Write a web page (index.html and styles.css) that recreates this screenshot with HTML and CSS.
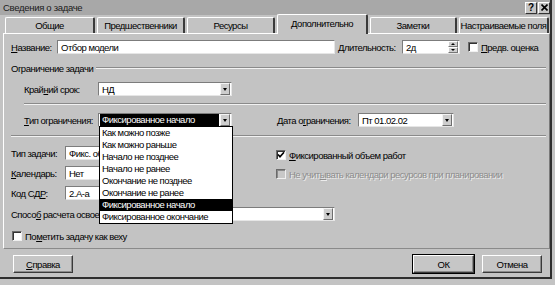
FILE: index.html
```html
<!DOCTYPE html>
<html lang="ru">
<head>
    <meta charset="UTF-8">
    <title>Сведения о задаче</title>
    <link rel="stylesheet" href="styles.css">
</head>
<body>
    <div class="window">
        <div class="titlebar">
            <span class="title">Сведения о задаче</span>
            <div class="caption-btns">
                <span class="cbtn">?</span>
                <span class="cbtn">
                    <svg width="7" height="7" viewBox="0 0 7 7"><path d="M0.5 0.5 L6.5 6.5 M6.5 0.5 L0.5 6.5" stroke="#000" stroke-width="1.6"/></svg>
                </span>
            </div>
        </div>

        <div class="tabs">
            <div class="tab t1">Общие</div>
            <div class="tab t2">Предшественники</div>
            <div class="tab t3">Ресурсы</div>
            <div class="tab t4 active">Дополнительно</div>
            <div class="tab t5">Заметки</div>
            <div class="tab t6">Настраиваемые поля</div>
        </div>

        <div class="panel">
            <!-- название / длительность -->
            <div class="row row-name">
                <label class="lbl lbl-name"><u>Н</u>азвание:</label>
                <div class="field name-field">Отбор модели</div>
                <label class="lbl lbl-dur"><u>Д</u>лительность:</label>
                <div class="field dur-field">
                    <span>2д</span>
                    <div class="spin">
                        <span class="spin-btn"><i class="tri up"></i></span>
                        <span class="spin-btn"><i class="tri"></i></span>
                    </div>
                </div>
                <span class="check"></span>
                <span class="check-text"><u>П</u>редв. оценка</span>
            </div>

            <!-- ограничение задачи -->
            <div class="group-title">
                <span>Ограничение задачи</span>
                <div class="etched"></div>
            </div>

            <div class="row row-deadline">
                <label class="lbl lbl-constr">Край<u>н</u>ий срок:</label>
                <div class="field combo deadline-combo">
                    <span>НД</span>
                    <span class="drop-btn"><i class="tri"></i></span>
                </div>
            </div>

            <div class="etched sep-inner"></div>

            <div class="row row-constraint">
                <label class="lbl lbl-constr"><u>Т</u>ип ограничения:</label>
                <div class="field combo constr-combo open">
                    <span class="selected">Фиксированное начало</span>
                    <span class="drop-btn"><i class="tri"></i></span>
                    <ul class="droplist">
                        <li>Как можно позже</li>
                        <li>Как можно раньше</li>
                        <li>Начало не позднее</li>
                        <li>Начало не ранее</li>
                        <li>Окончание не позднее</li>
                        <li>Окончание не ранее</li>
                        <li class="hl">Фиксированное начало</li>
                        <li>Фиксированное окончание</li>
                    </ul>
                </div>
                <label class="lbl lbl-date">Дата о<u>г</u>раничения:</label>
                <div class="field combo date-combo">
                    <span>Пт 01.02.02</span>
                    <span class="drop-btn"><i class="tri"></i></span>
                </div>
            </div>

            <div class="etched sep-full"></div>

            <div class="cols">
                <div class="col-left">
                    <div class="row row-left">
                        <label class="lbl lbl-left">Тип задачи:</label>
                        <div class="field left-field">Фикс. объем работ</div>
                    </div>
                    <div class="row row-left">
                        <label class="lbl lbl-left"><u>К</u>алендарь:</label>
                        <div class="field left-field">Нет</div>
                    </div>
                    <div class="row row-left">
                        <label class="lbl lbl-left">Код СД<u>Р</u>:</label>
                        <div class="field left-field">2.А-а</div>
                    </div>
                </div>
                <div class="col-right">
                    <div class="row row-check">
                        <span class="check checked">
                            <svg width="8" height="8" viewBox="0 0 8 8"><path d="M1 3.5 L3 5.8 L7 1.2" fill="none" stroke="#000" stroke-width="1.7"/></svg>
                        </span>
                        <span class="check-text"><u>Ф</u>иксированный объем работ</span>
                    </div>
                    <div class="row row-check">
                        <span class="check disabled"></span>
                        <span class="check-text disabled-text">Не учит<u>ы</u>вать календари ресурсов при планировании</span>
                    </div>
                </div>
            </div>

            <div class="row row-earned">
                <label class="lbl lbl-earned">Спосо<u>б</u> расчета освоенного объема:</label>
                <div class="field combo earned-combo">
                    <span></span>
                    <span class="drop-btn"><i class="tri"></i></span>
                </div>
            </div>

            <div class="row row-milestone">
                <span class="check"></span>
                <span class="check-text">По<u>м</u>етить задачу как веху</span>
            </div>
        </div>

        <div class="buttons">
            <button type="button" class="btn btn-help"><u>С</u>правка</button>
            <button type="button" class="btn btn-ok">ОК</button>
            <button type="button" class="btn btn-cancel">Отмена</button>
        </div>
    </div>
</body>
</html>
```

FILE: styles.css
```css
* {
    box-sizing: border-box;
}

body {
    margin: 0;
    background-color: #c3c3c3;
    font-family: "Liberation Sans", Arial, sans-serif;
    font-size: 9.5px;
    letter-spacing: -0.5px;
    color: #000;
}

u {
    text-decoration: underline;
    text-underline-offset: 1px;
}

.window {
    width: 552px;
    height: 279px;
    background-color: #c3c3c3;
    border-right: 2px solid #2e2e2e;
    border-bottom: 2px solid #2e2e2e;
    display: flex;
    flex-direction: column;
}

/* заголовок окна */
.titlebar {
    height: 15px;
    background-color: #a8a8a8;
    display: flex;
    align-items: center;
    justify-content: space-between;
    padding: 0 0 0 3px;
}

.title {
    color: #1a1a1a;
    letter-spacing: -0.3px;
}

.caption-btns {
    display: flex;
    gap: 1px;
}

.cbtn {
    width: 12px;
    height: 12px;
    background-color: #c6c6c6;
    border: 1px solid;
    border-color: #fff #333 #333 #fff;
    font-size: 10px;
    font-weight: bold;
    letter-spacing: 0;
    display: flex;
    align-items: center;
    justify-content: center;
    line-height: 1;
}

/* вкладки */
.tabs {
    display: flex;
    align-items: flex-end;
    height: 18px;
    padding-left: 5px;
    gap: 2px;
}

.tab {
    height: 16px;
    border-top: 1px solid #fff;
    border-left: 1px solid #fff;
    border-right: 2px solid #3a3a3a;
    border-radius: 2px 2px 0 0;
    display: flex;
    align-items: center;
    justify-content: center;
    white-space: nowrap;
    background-color: #c3c3c3;
}

.t1 { width: 90px; }
.t2 { width: 88px; }
.t3 { width: 88px; }
.t4 { width: 91px; }
.t5 { width: 87px; }
.t6 { width: 90px; }

.tab.active {
    height: 20px;
    margin-bottom: -1px;
    padding-bottom: 3px;
    position: relative;
    z-index: 1;
}

/* панель вкладки */
.panel {
    margin-left: 3px;
    height: 216px;
    border: 1px solid;
    border-color: #fff #7a7a7a #8a8a8a #fff;
    padding: 6px 3px 0 7px;
    display: flex;
    flex-direction: column;
}

.row {
    display: flex;
    align-items: center;
    height: 14px;
}

.lbl {
    white-space: nowrap;
}

.field {
    height: 14px;
    background-color: #fff;
    border: 1px solid;
    border-color: #7c7c7c #e6e6e6 #e6e6e6 #7c7c7c;
    display: flex;
    align-items: center;
    padding-left: 3px;
    white-space: nowrap;
    overflow: hidden;
}

.lbl-name { width: 46px; }
.name-field { width: 278px; }
.lbl-dur { margin-left: 3px; width: 64px; }

.dur-field {
    width: 58px;
    justify-content: space-between;
    padding-right: 1px;
}

.spin {
    display: flex;
    flex-direction: column;
}

.spin-btn {
    width: 10px;
    height: 6px;
    background-color: #d0d0d0;
    border: 1px solid;
    border-color: #fff #777 #777 #fff;
    display: flex;
    align-items: center;
    justify-content: center;
}

.tri {
    display: block;
    width: 0;
    height: 0;
    border-left: 2.5px solid transparent;
    border-right: 2.5px solid transparent;
    border-top: 3px solid #000;
}

.tri.up {
    border-top: none;
    border-bottom: 3px solid #000;
}

.spin-btn .tri {
    border-left-width: 2px;
    border-right-width: 2px;
    border-top-width: 2px;
}

.spin-btn .tri.up {
    border-bottom-width: 2px;
}

.check {
    width: 10px;
    height: 10px;
    flex-shrink: 0;
    background-color: #fff;
    border: 1px solid;
    border-color: #6a6a6a #f0f0f0 #f0f0f0 #6a6a6a;
    box-shadow: inset 1px 1px 0 #333;
    display: flex;
    align-items: center;
    justify-content: center;
}

.row-name .check {
    margin-left: 8px;
}

.check-text {
    margin-left: 3px;
    white-space: nowrap;
}

.check.disabled {
    background-color: #c8c8c8;
    box-shadow: inset 1px 1px 0 #8a8a8a;
}

.disabled-text {
    color: #8c8c8c;
    text-shadow: 1px 1px 0 #ececec;
}

/* группа ограничения */
.group-title {
    display: flex;
    align-items: center;
    height: 12px;
    margin-top: 8px;
    gap: 3px;
}

.etched {
    height: 2px;
    border-top: 1px solid #8a8a8a;
    border-bottom: 1px solid #f2f2f2;
}

.group-title .etched {
    flex: 1;
    margin-top: -1px;
}

.row-deadline {
    margin-top: 8px;
    padding-left: 13px;
}

.lbl-constr { width: 74px; }

.combo {
    justify-content: space-between;
    padding-right: 1px;
}

.drop-btn {
    width: 10px;
    height: 12px;
    flex-shrink: 0;
    background-color: #cdcdcd;
    border: 1px solid;
    border-color: #f4f4f4 #6e6e6e #6e6e6e #f4f4f4;
    display: flex;
    align-items: center;
    justify-content: center;
}

.deadline-combo { width: 134px; }

.sep-inner {
    margin-top: 7px;
    margin-left: 13px;
}

.row-constraint {
    margin-top: 8px;
    padding-left: 13px;
}

.constr-combo {
    width: 134px;
    overflow: visible;
    padding-left: 1px;
}

.selected {
    background-color: #000;
    color: #fff;
    flex: 1;
    height: 12px;
    line-height: 12px;
    padding-left: 2px;
    margin-right: 1px;
}

.open {
    position: relative;
}

.droplist {
    position: absolute;
    top: 100%;
    left: 0;
    width: 134px;
    margin: 0;
    padding: 0;
    list-style: none;
    background-color: #fff;
    border: 1px solid #000;
    z-index: 5;
}

.droplist li {
    height: 12px;
    line-height: 12px;
    padding-left: 2px;
}

.droplist li.hl {
    background-color: #000;
    color: #fff;
}

.lbl-date {
    margin-left: 45px;
    width: 81px;
}

.date-combo { width: 96px; }

.sep-full {
    margin-top: 8px;
}

/* нижняя часть */
.cols {
    display: flex;
}

.col-left {
    width: 265px;
    display: flex;
    flex-direction: column;
    padding-top: 9px;
    gap: 6px;
}

.lbl-left { width: 54px; }
.left-field { width: 150px; }

.col-right {
    display: flex;
    flex-direction: column;
    padding-top: 11px;
    gap: 5px;
}

.row-check {
    height: 14px;
}

.row-earned {
    margin-top: 7px;
}

.lbl-earned { width: 159px; }
.earned-combo { width: 165px; }

.row-milestone {
    margin-top: 8px;
    padding-left: 1px;
}

/* кнопки */
.buttons {
    display: flex;
    margin-top: 6px;
    padding: 0 8px 0 13px;
    gap: 8px;
}

.btn {
    height: 18px;
    width: 60px;
    font-family: inherit;
    font-size: 9.5px;
    letter-spacing: -0.5px;
    color: #000;
    background-color: #c6c6c6;
    border: 1px solid;
    border-color: #fff #3a3a3a #3a3a3a #fff;
    box-shadow: inset -1px -1px 0 #8a8a8a;
    padding: 0;
}

.btn-ok {
    margin-left: auto;
    width: 61px;
    outline: 1px solid #000;
    outline-offset: 0;
}
```
